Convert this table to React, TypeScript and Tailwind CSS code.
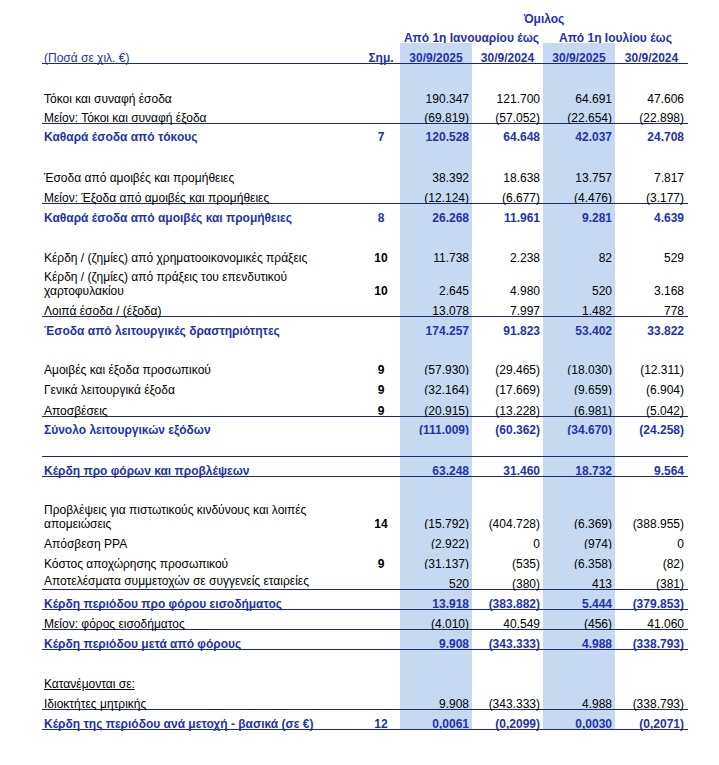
import React from "react";

type RowProps = {
  h: string;
  label?: React.ReactNode;
  note?: string;
  v?: [string, string, string, string];
  bold?: boolean;
  border?: boolean;
  labelClass?: string;
};

const BLUE = "text-[#1e33ad]";

function Row({ h, label, note, v, bold, border, labelClass }: RowProps) {
  const tone = bold ? `font-bold ${BLUE}` : "text-black";
  return (
    <div
      className={`grid grid-cols-[320px_38px_72px_71px_72px_73px] ${h} ${
        border ? "border-b border-[#1b2a6b]" : ""
      }`}
    >
      <div className={`flex items-end pl-[2px] leading-[14px] ${tone}`}>
        <span className={labelClass ?? "-mb-[2px]"}>{label}</span>
      </div>
      <div className={`flex items-end justify-center leading-[14px] font-bold ${bold ? BLUE : "text-black"}`}>
        <span className="-mb-[2px]">{note}</span>
      </div>
      <div className={`flex items-end justify-end pr-[3px] leading-[14px] bg-[#c6d9f1] ${tone}`}>
        <span className="-mb-[2px]">{v?.[0]}</span>
      </div>
      <div className={`flex items-end justify-end pr-[3px] leading-[14px] ${tone}`}>
        <span className="-mb-[2px]">{v?.[1]}</span>
      </div>
      <div className={`flex items-end justify-end pr-[3px] leading-[14px] bg-[#c6d9f1] ${tone}`}>
        <span className="-mb-[2px]">{v?.[2]}</span>
      </div>
      <div className={`flex items-end justify-end pr-[4px] leading-[14px] ${tone}`}>
        <span className="-mb-[2px]">{v?.[3]}</span>
      </div>
    </div>
  );
}

export default function App() {
  return (
    <div className="w-[719px] h-[765px] bg-white font-['Liberation_Sans',Arial,sans-serif] text-[12px]">
      <div className="ml-[42px] w-[646px]">
        {/* Header row 1 */}
        <div className={`grid grid-cols-[358px_288px] h-[24px] font-bold ${BLUE}`}>
          <div />
          <div className="flex items-end justify-center leading-[14px]">
            <span className="-mb-[2px]">Όμιλος</span>
          </div>
        </div>
        {/* Header row 2 */}
        <div className={`grid grid-cols-[358px_143px_145px] h-[19px] font-bold ${BLUE}`}>
          <div />
          <div className="flex items-end justify-center leading-[14px]">
            <span className="-mb-[2px]">Από 1η Ιανουαρίου έως</span>
          </div>
          <div className="flex items-end justify-center leading-[14px]">
            <span className="-mb-[2px]">Από 1η Ιουλίου έως</span>
          </div>
        </div>
        {/* Header row 3 */}
        <div className={`grid grid-cols-[320px_38px_72px_71px_72px_73px] h-[21px] border-b border-[#1b2a6b] ${BLUE}`}>
          <div className="flex items-end pl-[2px] leading-[14px]">
            <span className="-mb-[2px]">(Ποσά σε χιλ. €)</span>
          </div>
          <div className="flex items-end justify-center leading-[14px] font-bold">
            <span className="-mb-[2px]">Σημ.</span>
          </div>
          <div className="flex items-end justify-center leading-[14px] font-bold bg-[#c6d9f1]">
            <span className="-mb-[2px]">30/9/2025</span>
          </div>
          <div className="flex items-end justify-center leading-[14px] font-bold">
            <span className="-mb-[2px]">30/9/2024</span>
          </div>
          <div className="flex items-end justify-center leading-[14px] font-bold bg-[#c6d9f1]">
            <span className="-mb-[2px]">30/9/2025</span>
          </div>
          <div className="flex items-end justify-center leading-[14px] font-bold">
            <span className="-mb-[2px]">30/9/2024</span>
          </div>
        </div>

        <Row h="h-[20px]" />
        <Row h="h-[20px]" label="Τόκοι και συναφή έσοδα" v={["190.347", "121.700", "64.691", "47.606"]} />
        <Row h="h-[20px]" border label="Μείον: Τόκοι και συναφή έξοδα" v={["(69.819)", "(57.052)", "(22.654)", "(22.898)"]} />
        <Row h="h-[18px]" bold label="Καθαρά έσοδα από τόκους" note="7" v={["120.528", "64.648", "42.037", "24.708"]} />
        <Row h="h-[21px]" />
        <Row h="h-[20px]" label="Έσοδα από αμοιβές και προμήθειες" v={["38.392", "18.638", "13.757", "7.817"]} />
        <Row h="h-[21px]" border label="Μείον: Έξοδα από αμοιβές και προμήθειες" v={["(12.124)", "(6.677)", "(4.476)", "(3.177)"]} />
        <Row h="h-[19px]" bold label="Καθαρά έσοδα από αμοιβές και προμήθειες" note="8" v={["26.268", "11.961", "9.281", "4.639"]} />
        <Row h="h-[20px]" />
        <Row h="h-[20px]" label="Κέρδη / (ζημίες) από χρηματοοικονομικές πράξεις" note="10" v={["11.738", "2.238", "82", "529"]} />
        <Row
          h="h-[33px]"
          label={
            <>
              Κέρδη / (ζημίες) από πράξεις του επενδυτικού
              <br />
              χαρτοφυλακίου
            </>
          }
          note="10"
          v={["2.645", "4.980", "520", "3.168"]}
        />
        <Row h="h-[21px]" border label="Λοιπά έσοδα / (έξοδα)" v={["13.078", "7.997", "1.482", "778"]} />
        <Row h="h-[19px]" bold label="Έσοδα από λειτουργικές δραστηριότητες" v={["174.257", "91.823", "53.402", "33.822"]} />
        <Row h="h-[19px]" />
        <Row h="h-[20px]" label="Αμοιβές και έξοδα προσωπικού" note="9" v={["(57.930)", "(29.465)", "(18.030)", "(12.311)"]} />
        <Row h="h-[20px]" label="Γενικά λειτουργικά έξοδα" note="9" v={["(32.164)", "(17.669)", "(9.659)", "(6.904)"]} />
        <Row h="h-[22px]" border label="Αποσβέσεις" note="9" v={["(20.915)", "(13.228)", "(6.981)", "(5.042)"]} />
        <Row h="h-[18px]" bold label="Σύνολο λειτουργικών εξόδων" v={["(111.009)", "(60.362)", "(34.670)", "(24.258)"]} />
        <Row h="h-[22px]" border />
        <Row h="h-[20px]" border bold label="Κέρδη προ φόρων και προβλέψεων" v={["63.248", "31.460", "18.732", "9.564"]} />
        <Row h="h-[19px]" />
        <Row
          h="h-[33px]"
          label={
            <>
              Προβλέψεις για πιστωτικούς κινδύνους και λοιπές
              <br />
              απομειώσεις
            </>
          }
          note="14"
          v={["(15.792)", "(404.728)", "(6.369)", "(388.955)"]}
        />
        <Row h="h-[20px]" label="Απόσβεση PPA" v={["(2.922)", "0", "(974)", "0"]} />
        <Row h="h-[20px]" label="Κόστος αποχώρησης προσωπικού" note="9" v={["(31.137)", "(535)", "(6.358)", "(82)"]} />
        <Row h="h-[21px]" border labelClass="mb-[1px]" label="Αποτελέσματα συμμετοχών σε συγγενείς εταιρείες" v={["520", "(380)", "413", "(381)"]} />
        <Row h="h-[20px]" border bold label="Κέρδη περιόδου προ φόρου εισοδήματος" v={["13.918", "(383.882)", "5.444", "(379.853)"]} />
        <Row h="h-[20px]" border label="Μείον: φόρος εισοδήματος" v={["(4.010)", "40.549", "(456)", "41.060"]} />
        <Row h="h-[20px]" border bold label="Κέρδη περιόδου μετά από φόρους" v={["9.908", "(343.333)", "4.988", "(338.793)"]} />
        <Row h="h-[19px]" />
        <Row h="h-[20px]" label="Κατανέμονται σε:" labelClass="-mb-[2px] underline" />
        <Row h="h-[21px]" border label="Ιδιοκτήτες μητρικής" v={["9.908", "(343.333)", "4.988", "(338.793)"]} />
        <Row h="h-[20px]" border bold label="Κέρδη της περιόδου ανά μετοχή - βασικά (σε €)" note="12" v={["0,0061", "(0,2099)", "0,0030", "(0,2071)"]} />
      </div>
    </div>
  );
}
